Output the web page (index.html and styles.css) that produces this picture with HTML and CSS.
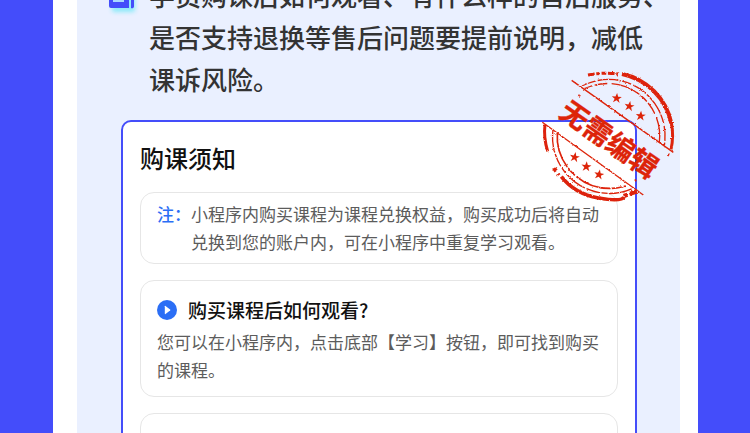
FILE: index.html
```
<!DOCTYPE html>
<html lang="zh-CN">
<head>
  <meta charset="UTF-8" />
  <meta name="viewport" content="width=device-width, initial-scale=1" />
  <title>购课须知</title>
  <link rel="stylesheet" href="styles.css">
</head>
<body>
  <main class="page">
    <section class="panel">
      <!-- Intro -->
      <div class="intro">
        <svg class="intro-icon" viewBox="0 0 32 40" aria-hidden="true">
          <rect class="icon-glow" x="5" y="12" width="23" height="22" rx="2" />
          <path fill="#444dfa" d="M2 4h20v26H4a2 2 0 0 1-2-2zM24 8h3v20a2 2 0 0 1-3 2z" />
          <path stroke="#a9d8ff" stroke-width="2" d="M6 16h11M6 23h11" />
        </svg>
        <p class="intro-text">学员购课后如何观看、有什么样的售后服务、<br>是否支持退换等售后问题要提前说明，减低<br>课诉风险。</p>
      </div>

      <!-- Notice card -->
      <article class="card">
        <h2>购课须知</h2>
        <div class="box note">
          <strong>注：</strong>
          <p>小程序内购买课程为课程兑换权益，购买成功后将自动<br>兑换到您的账户内，可在小程序中重复学习观看。</p>
        </div>
        <div class="box">
          <h3>
            <svg class="play" viewBox="0 0 20 20" aria-hidden="true">
              <circle cx="10" cy="10" r="10" fill="#2b6ef5" />
              <path fill="#fff" d="M7.8 6.3v7.4q0 .8.7.3l4.6-3.5q.5-.5 0-1L8.5 6q-.7-.5-.7.3z" />
            </svg>
            购买课程后如何观看?
          </h3>
          <p>您可以在小程序内，点击底部【学习】按钮，即可找到购买的课程。</p>
        </div>
        <div class="box box-next"></div>

        <!-- Stamp -->
        <svg class="stamp" viewBox="0 0 480 450" role="img" aria-label="无需编辑">
          <defs>
            <path id="star" d="M0-16 4-5 15-5 6 2 10 13 0 6-10 13-6 2-15-5-4-5z" />
            <filter id="rough" x="-5%" y="-5%" width="110%" height="110%">
              <feTurbulence type="fractalNoise" baseFrequency="0.2" numOctaves="2" seed="4" />
              <feDisplacementMap in="SourceGraphic" scale="7" xChannelSelector="R" yChannelSelector="G" />
            </filter>
          </defs>
          <g fill="none" stroke="#dd2409" filter="url(#rough)">
            <path stroke-width="12" d="M276 42A190 190 0 0 1 424 190" />
            <path stroke-width="9" d="M424 188A190 190 0 0 1 423 268" />
            <path stroke-width="9" stroke-dasharray="20 5 9 7 14 5" d="M174 45Q220 36 264 42" />
            <path stroke-width="9" d="M45 194Q40 232 53 274" />
            <path stroke-width="12" stroke-dasharray="12 9" d="M72 324L86 346" />
            <path stroke-width="11" d="M94 350Q135 402 205 414T282 411" />
            <path stroke-width="13" stroke-dasharray="12 6 24 4" d="M281 408L325 393" />
            <path stroke-width="4" stroke-dasharray="45 5 70 4 28 7" d="M156 78A170 170 0 0 1 403 256" />
            <path stroke-width="4" stroke-dasharray="26 6 38 13 90 5" d="M164 86A157 157 0 0 1 388 246" />
            <path stroke-width="4" stroke-dasharray="70 5 40 7 18 4" d="M69 208A170 170 0 0 0 306 386" />
            <path stroke-width="5" stroke-dasharray="110 4 30 6" d="M82 217A157 157 0 0 0 286 378" />
            <path stroke-width="4" d="M125 61L430 277M37 187L340 405" />
            <path stroke-width="5" d="M145 105l6 3M417 282l-4 6M315 358l3 6" />
          </g>
          <g fill="#dd2409">
            <use href="#star" transform="translate(260 115) rotate(5)" />
            <use href="#star" transform="translate(298 139) rotate(10)" />
            <use href="#star" transform="translate(332 168) rotate(5)" />
            <use href="#star" transform="translate(134 292) rotate(10)" />
            <use href="#star" transform="translate(169 320) rotate(5)" />
            <use href="#star" transform="translate(207 344) rotate(10)" />
            <text class="stamp-text" transform="translate(238 238) rotate(35)" y="31">无需编辑</text>
          </g>
        </svg>
      </article>
    </section>
  </main>
</body>
</html>
```
FILE: styles.css
```
* {
  box-sizing: border-box; margin: 0; padding: 0;
}
body {
  font-family: 'Noto Sans CJK SC', 'Noto Sans', sans-serif;
  background: #444dfa;
  height: 100vh;
  overflow: hidden;
  padding: 0 52px 0 53px;
}
.page {
  background: #fff;
  padding: 0 18px 0 24px;
}
.panel {
  background: #eaf0ff;
  padding: 0 43px 0 44px;
  height: 100vh;
  overflow: hidden;
}
.intro {
  display: flex;
  gap: 10px;
  margin-top: -26px;
}
.intro-icon {
  flex: none;
  width: 32px;
  height: 40px;
  margin-left: -14px;
  margin-top: 4px;
}
.icon-glow {
  fill: #8eeaf8;
  filter: blur(2px);
}
.intro-text {
  font-size: 26px;
  line-height: 42px;
  font-weight: 500;
  color: #333;
  white-space: nowrap;
}
.card {
  position: relative;
  display: flex;
  flex-direction: column;
  gap: 16px;
  margin-top: 20px;
  padding: 18px 17px;
  background: #fff;
  border: 2px solid #444dfa;
  border-radius: 10px;
}
.card h2 {
  font-size: 24px;
  line-height: 36px;
  font-weight: 500;
  color: #111;
}
.box {
  padding: 15px 16px 12px;
  border: 1px solid #e6e6e6;
  border-radius: 14px;
  font-size: 17px;
  line-height: 28px;
  color: #5c5c5c;
}
.note {
  display: flex;
  padding: 7px 16px;
}
.note strong {
  font-weight: 500;
  color: #2b6ef5;
}
.note p {
  white-space: nowrap;
}
.box h3 {
  display: flex;
  align-items: center;
  gap: 11px;
  margin-bottom: 4px;
  font-size: 19px;
  line-height: 28px;
  font-weight: 500;
  color: #111;
}
.play {
  width: 20px;
  height: 20px;
}
.box-next {
  min-height: 117px;
}
.stamp {
  position: absolute;
  top: -62px;
  right: -55px;
  width: 160px;
  height: 150px;
}
.stamp-text {
  font-size: 84px;
  font-weight: 700;
  text-anchor: middle;
  stroke: #dd2409;
  stroke-width: 1px;
}
```
